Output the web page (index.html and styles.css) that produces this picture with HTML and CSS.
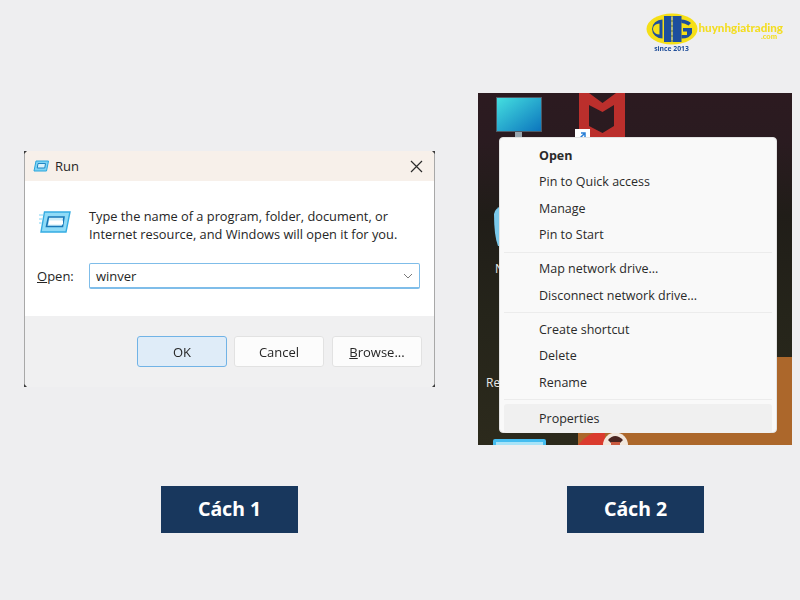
FILE: index.html
```html
<!DOCTYPE html>
<html lang="vi">
<head>
<meta charset="utf-8">
<title>Cách 1, Cách 2</title>
<link rel="stylesheet" href="styles.css">
</head>
<body>
<div class="page">
  <header class="brand">
    <div class="brand-mark">
      <svg class="brand-oval" width="52" height="32" viewBox="0 0 52 32" aria-hidden="true">
        <ellipse cx="26" cy="16" rx="25.500" ry="15.500" fill="#f5df17"/>
        <path d="M16.500 6.500 A10.500 9.500 0 0 0 16.500 25.500 Z M13.500 10.500 V21.500 A6.500 5.500 0 0 1 13.500 10.500 Z" fill="#1d4f9e" fill-rule="evenodd"/>
        <rect x="18" y="3" width="7.500" height="26" fill="#1d4f9e"/>
        <rect x="26.500" y="3" width="9" height="26" fill="#1d4f9e"/>
        <path d="M35 6.500 Q41 6.500 45 10 L42.500 12.500 Q39 10 35.500 10 Z" fill="#1d4f9e"/>
        <path d="M35.500 22 H41 V18.500 H37 V15 H46 V20 Q44 25.500 35.500 25.500 Z" fill="#1d4f9e"/>
        <path d="M26 4 V28" stroke="#dfe6c0" stroke-width=".8" stroke-dasharray="3 2"/>
      </svg>
      <span class="brand-since">since 2013</span>
    </div>
    <div class="brand-words">
      <span class="brand-name">huynhgiatrading</span>
      <span class="brand-tld">.com</span>
    </div>
  </header>

  <main class="shots">
    <section class="run">
      <i class="notch notch-tl"></i>
      <i class="notch notch-tr"></i>
      <i class="notch notch-bl"></i>
      <i class="notch notch-br"></i>
      <div class="run-title">
        <svg class="run-icon-small" width="16" height="12" viewBox="0 0 32 24" aria-hidden="true">
          <path d="M6 2 H31 L27 22 H2 Z" fill="#7fd3f4" stroke="#2ba6dd" stroke-width="2"/>
          <path d="M10 7 H25 L23.500 16 H8.500 Z" fill="#d9f2fb" stroke="#1f86c4" stroke-width="2"/>
        </svg>
        <span class="run-title-text">Run</span>
        <svg class="run-close" width="13" height="13" viewBox="0 0 13 13" aria-hidden="true">
          <path d="M1 1 L12 12 M12 1 L1 12" stroke="#2b2b2b" stroke-width="1.200" fill="none"/>
        </svg>
      </div>
      <div class="run-body">
        <div class="run-intro">
          <svg class="run-icon" width="32" height="22" viewBox="0 0 32 22" aria-hidden="true">
            <path d="M5.500 1 H31 L27 21 H2 Z" fill="#8fdbf7" stroke="#35ace2" stroke-width="1.400"/>
            <path d="M9.500 6 H25 L23.500 15.500 H7.500 Z" fill="#cdeefa" stroke="#1878b8" stroke-width="1.600"/>
            <path d="M10 11.500 H24" stroke="#ffffff" stroke-width="4"/>
            <path d="M0 4 H4 M0 8 H3.200 M0 12 H2.600" stroke="#7fd3f4" stroke-width="1"/>
          </svg>
          <p class="run-text">Type the name of a program, folder, document, or<br>Internet resource, and Windows will open it for you.</p>
        </div>
        <div class="run-open">
          <span class="run-label"><u>O</u>pen:</span>
          <div class="run-input">
            <span>winver</span>
            <svg width="10" height="6" viewBox="0 0 10 6" aria-hidden="true"><path d="M1 1 L5 5 L9 1" stroke="#7a7a7a" fill="none"/></svg>
          </div>
        </div>
      </div>
      <div class="run-foot">
        <button class="btn btn-primary">OK</button>
        <button class="btn">Cancel</button>
        <button class="btn btn-browse"><u>B</u>rowse...</button>
      </div>
    </section>

    <section class="desktop">
      <div class="desk-orange"></div>
      <svg class="desk-icons" width="314" height="352" viewBox="0 0 314 352" aria-hidden="true">
        <defs>
          <linearGradient id="mon" x1="0" y1="0" x2="1" y2="1">
            <stop offset="0" stop-color="#45e0e0"/>
            <stop offset="1" stop-color="#0b74bd"/>
          </linearGradient>
        </defs>
        <rect x="18.500" y="4.500" width="45" height="34" fill="url(#mon)" stroke="#4d5a66"/>
        <rect x="37" y="39" width="7" height="6" fill="#97a4ad"/>
        <rect x="30" y="44" width="22" height="4" fill="#b8c2c8"/>
        <path d="M101 0 H111 L124.500 10 L138 0 H147 V44 H101 Z M111 12 V33 L124.500 40 L136 33 V12 L124.500 19 Z" fill="#bb2f2c" fill-rule="evenodd"/>
        <rect x="97" y="36" width="15" height="14" fill="#ffffff"/>
        <path d="M101 46 L107 40 M103 40 H107 V44" stroke="#2a7fd6" stroke-width="1.500" fill="none"/>
        <path d="M16 121 Q17 115 24 113 V153 H20 Q16 143 16 121 Z" fill="#7ac8ea"/>
        <path d="M15 348 Q15 346 17 346 H66 Q68 346 68 348 V352 H15 Z" fill="#45bdf0"/>
        <rect x="18" y="349" width="47" height="3" fill="#a7e3f8"/>
        <path d="M100 352 Q110 339 127 337 V352 Z" fill="#da3b2e"/>
        <circle cx="137.500" cy="352" r="12.500" fill="#f1e6dc"/>
        <path d="M130 347 Q137 339 145 347 L142 350 H133 Z" fill="#4a2420"/>
        <rect x="133" y="349" width="9" height="3" fill="#c9593f"/>
      </svg>
      <span class="desk-label desk-label-n">N</span>
      <span class="desk-label desk-label-re">Re</span>
      <nav class="menu">
        <div class="menu-group">
          <div class="menu-item menu-strong">Open</div>
          <div class="menu-item">Pin to Quick access</div>
          <div class="menu-item">Manage</div>
          <div class="menu-item">Pin to Start</div>
        </div>
        <div class="menu-group">
          <div class="menu-item">Map network drive...</div>
          <div class="menu-item">Disconnect network drive...</div>
        </div>
        <div class="menu-group">
          <div class="menu-item">Create shortcut</div>
          <div class="menu-item">Delete</div>
          <div class="menu-item">Rename</div>
        </div>
        <div class="menu-group">
          <div class="menu-item menu-hover">Properties</div>
        </div>
      </nav>
    </section>
  </main>

  <footer class="tags">
    <div class="tag">Cách 1</div>
    <div class="tag">Cách 2</div>
  </footer>
</div>
</body>
</html>
```
FILE: styles.css
```css
* { box-sizing: border-box; }
html, body { margin: 0; padding: 0; }
body {
  background: #eeeef0;
  font-family: "Open Sans", "Noto Sans", sans-serif;
  color: #222;
}
.page {
  width: 800px;
  height: 600px;
  overflow: hidden;
  display: flex;
  flex-direction: column;
}

/* Logo */
.brand {
  height: 93px;
  padding: 13px 17px 0 0;
  display: flex;
  justify-content: flex-end;
  align-items: flex-start;
  flex: none;
  filter: blur(.4px);
}
.brand-mark {
  display: flex;
  flex-direction: column;
  align-items: center;
  width: 52px;
}
.brand-oval { display: block; }
.brand-since {
  font-size: 6.800px;
  line-height: 8px;
  font-weight: 700;
  color: #1f4e9a;
  margin-top: 0;
  white-space: nowrap;
}
.brand-words {
  display: flex;
  flex-direction: column;
  align-items: flex-end;
  margin-left: 1px;
  padding-top: 9px;
  font-family: "Lato", sans-serif;
  font-weight: 900;
  color: #f3dd22;
}
.brand-name {
  font-size: 11.600px;
  line-height: 12px;
  white-space: nowrap;
}
.brand-tld {
  font-size: 7.500px;
  line-height: 5px;
  margin-right: 6px;
}

/* Two screenshots */
.shots {
  height: 352px;
  padding: 0 8px 0 24px;
  display: flex;
  justify-content: space-between;
  align-items: center;
  flex: none;
  filter: blur(.3px);
}

/* Run dialog */
.run {
  position: relative;
  width: 411px;
  height: 236px;
  background: #f0f0f1;
  border-left: 1px solid #a8a8a8;
  border-right: 1px solid #a8a8a8;
  border-radius: 0 0 3px 3px;
  display: flex;
  flex-direction: column;
  font-size: 13px;
  color: #262626;
}
.notch {
  position: absolute;
  width: 3px;
  height: 3px;
  background: #3a3a3a;
}
.notch-tl { left: -1px; top: 0; clip-path: polygon(0 0, 100% 0, 0 100%); }
.notch-tr { right: -1px; top: 0; clip-path: polygon(0 0, 100% 0, 100% 100%); }
.notch-bl { left: -1px; bottom: 0; clip-path: polygon(0 0, 100% 100%, 0 100%); }
.notch-br { right: -1px; bottom: 0; clip-path: polygon(100% 0, 100% 100%, 0 100%); }
.run-title {
  height: 30px;
  background: #f7f0ea;
  display: flex;
  align-items: center;
  padding: 0 11px 0 8px;
  flex: none;
}
.run-title-text {
  margin-left: 6px;
  font-size: 13px;
  flex: 1;
}
.run-body {
  height: 135px;
  background: #fff;
  padding: 26px 14px 0 14px;
  flex: none;
}
.run-intro {
  display: flex;
  align-items: flex-start;
  gap: 18px;
}
.run-icon { margin-top: 4px; flex: none; }
.run-text {
  margin: 0;
  font-size: 12.800px;
  line-height: 18px;
  white-space: nowrap;
}
.run-open {
  display: flex;
  align-items: center;
  margin-top: 20px;
  gap: 16px;
}
.run-label { font-size: 13px; margin-left: -2px; width: 36px; }
.run-input {
  width: 332px;
  height: 26px;
  border: 1px solid #7fbde9;
  border-bottom-width: 2px;
  border-radius: 2px;
  background: #fff;
  padding: 0 6px;
  display: flex;
  align-items: center;
  justify-content: space-between;
}
.run-foot {
  flex: 1;
  display: flex;
  justify-content: flex-end;
  gap: 7px;
  padding: 20px 12px 0 0;
}
.btn {
  width: 90px;
  height: 31px;
  border: 1px solid #e2e2e2;
  border-radius: 3px;
  background: #fcfcfc;
  font: inherit;
  font-size: 13px;
  color: #262626;
  padding: 0;
}
.btn-browse { margin-left: 1px; }
.btn-primary {
  background: #dfecf8;
  border-color: #71b3e6;
}

/* Desktop + context menu */
.desktop {
  position: relative;
  width: 314px;
  height: 352px;
  overflow: hidden;
  background: linear-gradient(180deg, #2c1a20 0, #2a1b20 14%, #201d18 35%, #25241a 62%, #2c2a1c 100%);
}
.desk-orange {
  position: absolute;
  left: 100px;
  right: 0;
  bottom: 0;
  top: 264px;
  background: #ac672b;
}
.desk-icons { position: absolute; left: 0; top: 0; }
.desk-label {
  position: absolute;
  font-size: 12px;
  line-height: 16px;
  color: #e8e8e8;
}
.desk-label-n { left: 17px; top: 168px; }
.desk-label-re { left: 8px; top: 282px; }
.menu {
  position: absolute;
  left: 21px;
  top: 44px;
  width: 278px;
  height: 296px;
  background: #f9f9f9;
  border: 1px solid #e3e3e3;
  border-radius: 4px;
  padding: 4.500px 4px 4px;
  font-size: 12.500px;
  color: #2a2a2a;
  display: flex;
  flex-direction: column;
}
.menu-group + .menu-group {
  border-top: 1px solid #ececec;
  margin-top: 3px;
  padding-top: 3.500px;
}
.menu-item {
  height: 26.500px;
  line-height: 26.500px;
  padding-left: 35px;
  white-space: nowrap;
  border-radius: 3px;
}
.menu-strong { font-weight: 700; }
.menu-hover {
  background: #f0f0f0;
  height: 29px;
  line-height: 29px;
}

/* Captions */
.tags {
  padding: 41px 0 0 161px;
  display: flex;
  gap: 269px;
}
.tag {
  width: 137px;
  height: 47px;
  padding-bottom: 3px;
  background: #18375d;
  color: #fff;
  font-family: "Noto Sans", sans-serif;
  font-size: 19.500px;
  font-weight: 700;
  display: flex;
  align-items: center;
  justify-content: center;
}
```
